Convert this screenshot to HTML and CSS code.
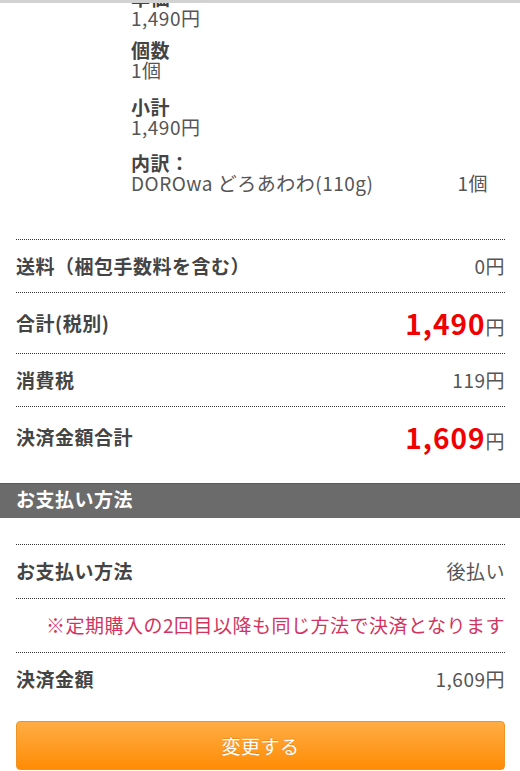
FILE: index.html
```html
<!DOCTYPE html>
<html lang="ja">
<head>
<meta charset="utf-8">
<title>ご注文内容の確認</title>
<link rel="stylesheet" href="styles.css">
</head>
<body>
<div class="topbar"></div>
<main class="page">
  <section class="item">
    <div class="thumb"></div>
    <div class="specs">
      <div class="spec spec-first">
        <div class="spec-label">単価</div>
        <div class="spec-value">1,490円</div>
      </div>
      <div class="spec">
        <div class="spec-label">個数</div>
        <div class="spec-value">1個</div>
      </div>
      <div class="spec">
        <div class="spec-label">小計</div>
        <div class="spec-value">1,490円</div>
      </div>
      <div class="spec">
        <div class="spec-label">内訳：</div>
        <div class="spec-line"><span>DOROwa どろあわわ(110g)</span><span>1個</span></div>
      </div>
    </div>
  </section>

  <section class="summary">
    <div class="row">
      <span class="row-label">送料（梱包手数料を含む）</span>
      <span class="row-value">0円</span>
    </div>
    <div class="row">
      <span class="row-label">合計(税別)</span>
      <span class="row-value"><span class="price">1,490</span>円</span>
    </div>
    <div class="row">
      <span class="row-label">消費税</span>
      <span class="row-value">119円</span>
    </div>
    <div class="row">
      <span class="row-label">決済金額合計</span>
      <span class="row-value"><span class="price">1,609</span>円</span>
    </div>
  </section>

  <h2 class="section-head">お支払い方法</h2>

  <section class="payment">
    <div class="row row-pay">
      <span class="row-label">お支払い方法</span>
      <span class="row-value">後払い</span>
    </div>
    <div class="row row-pay row-note">
      <span class="note">※定期購入の2回目以降も同じ方法で決済となります</span>
    </div>
    <div class="row row-pay">
      <span class="row-label">決済金額</span>
      <span class="row-value">1,609円</span>
    </div>
  </section>

  <button class="btn" type="button">変更する</button>
</main>
</body>
</html>
```

FILE: styles.css
```css
html, body {
  margin: 0;
  padding: 0;
  overflow: hidden;
  background: #fff;
}

body {
  font-family: "Noto Sans CJK JP", "Noto Sans", sans-serif;
  font-size: 19px;
  line-height: 20px;
  letter-spacing: 0.5px;
  color: #555;
}

.topbar {
  position: fixed;
  top: 0;
  left: 0;
  right: 0;
  height: 3px;
  background: #d2d2d2;
  z-index: 5;
}

.page {
  padding: 0 15px 0 16px;
}

/* product item */
.item {
  display: grid;
  grid-template-columns: 115px 1fr;
  margin-top: -12px;
  padding-bottom: 46px;
}

.specs {
  display: flex;
  flex-direction: column;
  padding-right: 17px;
}

.spec {
  margin-top: 16.5px;
}

.spec-first {
  margin-top: 0;
  margin-bottom: -4.5px;
}

.spec-label {
  font-weight: 700;
  color: #444;
}

.spec-value {
  color: #555;
}

.spec-line {
  display: flex;
  justify-content: space-between;
  color: #555;
}

/* rows */
.row {
  display: flex;
  justify-content: space-between;
  align-items: center;
  border-top: 1px dotted #333;
  padding: 16px 0;
}

.row-label {
  font-weight: 700;
  color: #444;
}

.row-value {
  color: #555;
}

.price {
  font-size: 28px;
  line-height: 28px;
  font-weight: 700;
  letter-spacing: 1px;
  color: #f00000;
}

.section-head {
  margin: 16px -15px 0 -16px;
  padding: 5px 16px 9px;
  border-top: 1px solid #5a5a5a;
  background: #6b6b6b;
  color: #fff;
  font-size: 19px;
  line-height: 20px;
  font-weight: 700;
}

.payment {
  margin-top: 26px;
}

.row-pay {
  padding: 16px 0 17px;
}

.row-note {
  justify-content: flex-end;
}

.note {
  color: #d3335f;
}

.btn {
  display: block;
  width: 100%;
  height: 49px;
  margin-top: 15px;
  border: 1px solid #ef9325;
  border-radius: 4px;
  background: linear-gradient(#ffad45, #ff8c05);
  color: #fff;
  font-family: "Noto Sans CJK JP", "Noto Sans", sans-serif;
  font-size: 19px;
  letter-spacing: 0.5px;
  text-shadow: 0 -1px 0 rgba(160, 80, 0, 0.25);
  cursor: pointer;
}
```
